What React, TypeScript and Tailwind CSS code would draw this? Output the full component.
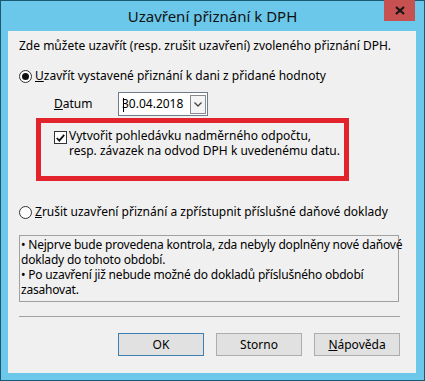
export default function App() {
  return (
    <div className="relative flex h-[381px] w-[425px] flex-col border border-[#1b5874] bg-[#6bc8ea] font-['Noto_Sans',sans-serif] text-[12px] leading-[16px] text-black">
      {/* title bar */}
      <div className="flex h-[30px] shrink-0 items-center justify-center pb-[1px]">
        <span className="text-[15px] text-[#111]">Uzavření přiznání k DPH</span>
      </div>
      <div className="absolute right-[9px] top-[-1px] flex h-[21px] w-[31px] items-center justify-center bg-[#c75050]">
        <svg width="10" height="9" viewBox="0 0 10 9">
          <path d="M1 1 L9 8 M9 1 L1 8" stroke="#151515" strokeWidth="2.2" />
        </svg>
      </div>

      {/* client area */}
      <div className="ml-[7px] mr-[8px] mb-[7px] flex flex-1 flex-col bg-[#f0f0f0] pl-[11px] pt-[7px]">
        <p className="whitespace-nowrap">Zde můžete uzavřít (resp. zrušit uzavření) zvoleného přiznání DPH.</p>

        <Radio checked className="mt-[14px]">
          <u>U</u>zavřít vystavené přiznání k dani z přidané hodnoty
        </Radio>

        <div className="mt-[8px] flex h-[24px] items-center">
          <span className="ml-[35px] w-[64px]">
            <u>D</u>atum
          </span>
          <div className="relative flex h-[24px] w-[90px] items-center border border-[#6f7c89] bg-white pl-[3px]">
            <span>30.04.2018</span>
            <span className="absolute left-[4px] top-[5px] h-[14px] w-[1px] bg-black" />
            <div className="absolute right-[1px] top-[2px] flex h-[19px] w-[16px] items-center justify-center border border-[#8a8a8a] bg-[#f4f4f4]">
              <svg width="8" height="5" viewBox="0 0 8 5">
                <path d="M0.5 0.5 L4 4 L7.5 0.5" stroke="#444" strokeWidth="1.3" fill="none" />
              </svg>
            </div>
          </div>
        </div>

        <div className="ml-[17px] mt-[2px] h-[63px] w-[313px] border-[5px] border-[#e2232b] pl-[13px] pt-[5px]">
          <div className="flex items-start gap-[2px] leading-[15px]">
            <div className="mt-[3px] flex h-[13px] w-[13px] shrink-0 items-center justify-center border border-[#333] bg-white">
              <svg width="9" height="8" viewBox="0 0 9 8">
                <path d="M0.8 4 L3.3 6.6 L8.2 0.8" stroke="#111" strokeWidth="1.8" fill="none" />
              </svg>
            </div>
            <span className="whitespace-nowrap">
              Vytvořit pohledávku nadměrného odpočtu,
              <br />
              resp. závazek na odvod DPH k uvedenému datu.
            </span>
          </div>
        </div>

        <Radio className="mt-[23px]">
          <u>Z</u>rušit uzavření přiznání a zpřístupnit příslušné daňové doklady
        </Radio>

        <div className="mt-[15px] h-[67px] w-[380px] whitespace-nowrap border border-[#a0a0a0] pl-[1px] pt-[1px] leading-[15px] tracking-[-0.2px]">
          • Nejprve bude provedena kontrola, zda nebyly doplněny nové daňové
          <br />
          doklady do tohoto období.
          <br />• Po uzavření již nebude možné do dokladů příslušného období
          <br />
          zasahovat.
        </div>

        <div className="mt-[14px] h-[1px] w-[381px] bg-[#a0a0a0]" />

        <div className="mt-[16px] flex w-[381px] justify-end gap-[12px]">
          <Button primary>OK</Button>
          <Button>Storno</Button>
          <Button>
            <u>N</u>ápověda
          </Button>
        </div>
      </div>
    </div>
  );
}

function Radio({
  checked,
  className,
  children,
}: {
  checked?: boolean;
  className?: string;
  children: React.ReactNode;
}) {
  return (
    <div className={`flex h-[16px] items-center gap-[3px] whitespace-nowrap ${className ?? ""}`}>
      <div className="flex h-[13px] w-[13px] items-center justify-center rounded-full border border-[#333] bg-white">
        {checked && <div className="h-[7px] w-[7px] rounded-full bg-[#111]" />}
      </div>
      <span>{children}</span>
    </div>
  );
}

function Button({ primary, children }: { primary?: boolean; children: React.ReactNode }) {
  return (
    <div
      className={`flex h-[23px] w-[86px] items-center justify-center border bg-[#e1e1e1] ${
        primary ? "border-[#3c7fb1]" : "border-[#adadad]"
      }`}
    >
      {children}
    </div>
  );
}
